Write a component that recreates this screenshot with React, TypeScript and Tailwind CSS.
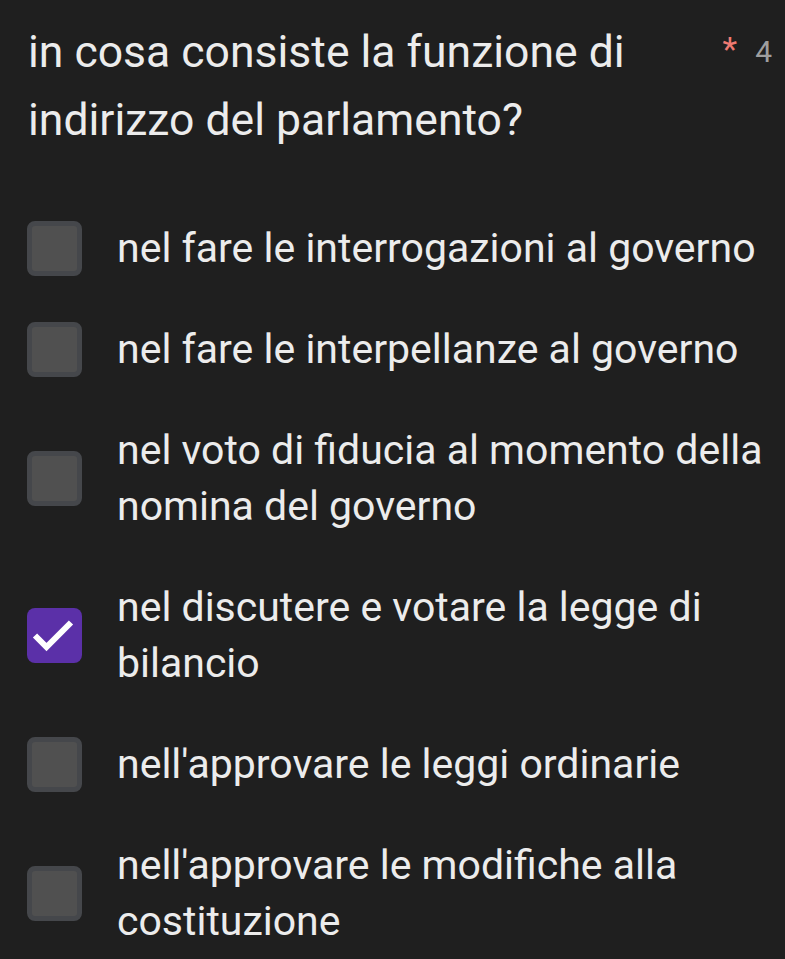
import React from 'react';

type Option = { label: string; checked?: boolean };

const options: Option[] = [
  { label: 'nel fare le interrogazioni al governo' },
  { label: 'nel fare le interpellanze al governo' },
  { label: 'nel voto di fiducia al momento della nomina del governo' },
  { label: 'nel discutere e votare la legge di bilancio', checked: true },
  { label: "nell'approvare le leggi ordinarie" },
  { label: "nell'approvare le modifiche alla costituzione" },
];

const CheckBox: React.FC<{ checked?: boolean }> = ({ checked }) =>
  checked ? (
    <div className="w-[55px] h-[55px] shrink-0 rounded-[8px] bg-[#5b30a8]">
      <svg viewBox="0 0 55 55" className="w-[55px] h-[55px]" fill="none" stroke="white" strokeWidth="6">
        <path d="M8 27.5 L19.5 39 L44 14.5" />
      </svg>
    </div>
  ) : (
    <div className="w-[55px] h-[55px] shrink-0 rounded-[8px] bg-[#505050] border-[5px] border-[#45474b]" />
  );

export default function App() {
  return (
    <div className="min-h-screen bg-[#1f1f1f] text-[#ececec] font-['Roboto',sans-serif] pt-[18px]">
      <div className="flex items-start pl-[28px] pr-[13px]">
        <h1 className="flex-1 text-[44.5px] leading-[68px] font-normal">
          in cosa consiste la funzione di
          <br />
          indirizzo del parlamento?
        </h1>
        <div className="flex items-start gap-[18px] pt-[14px] text-[30px]">
          <span className="text-[#f07a72] text-[34px] leading-[34px]">*</span>
          <span className="text-[#9e9e9e] leading-[40px]">4</span>
        </div>
      </div>
      <div className="flex flex-col gap-[45px] mt-[66px] pl-[27px] pr-[10px]">
        {options.map((o) => (
          <div key={o.label} className="flex items-center gap-[35px]">
            <CheckBox checked={o.checked} />
            <span className="text-[41px] leading-[56px]">{o.label}</span>
          </div>
        ))}
      </div>
    </div>
  );
}
